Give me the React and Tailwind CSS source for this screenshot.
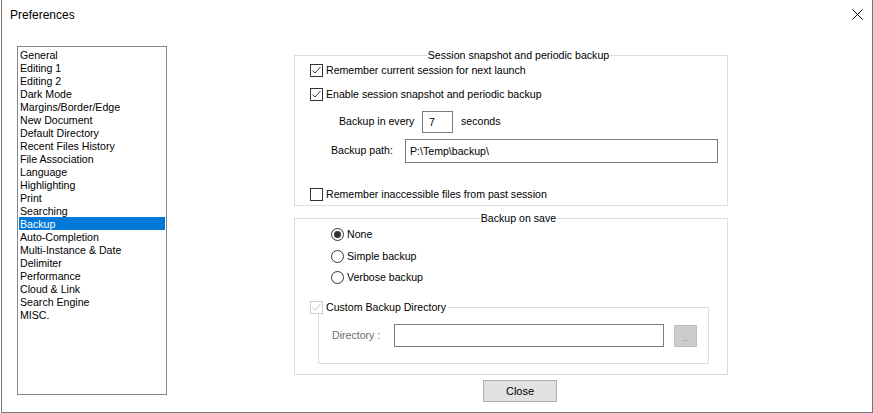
import React from "react";

const categories = [
  "General",
  "Editing 1",
  "Editing 2",
  "Dark Mode",
  "Margins/Border/Edge",
  "New Document",
  "Default Directory",
  "Recent Files History",
  "File Association",
  "Language",
  "Highlighting",
  "Print",
  "Searching",
  "Backup",
  "Auto-Completion",
  "Multi-Instance & Date",
  "Delimiter",
  "Performance",
  "Cloud & Link",
  "Search Engine",
  "MISC.",
];

const Checkbox = ({ checked, disabled, label }) => (
  <div className="flex items-center h-[13px] gap-[3px]">
    <div
      className={
        "w-[13px] h-[13px] bg-white border shrink-0 " +
        (disabled ? "border-[#cccccc]" : "border-[#333333]")
      }
    >
      {checked && (
        <svg width="11" height="11" viewBox="0 0 11 11" className="block">
          <polyline
            points="1.5,5.5 4,8 9.5,2"
            fill="none"
            stroke={disabled ? "#c4c4c4" : "#333333"}
            strokeWidth="1"
          />
        </svg>
      )}
    </div>
    <span className="leading-[13px] whitespace-nowrap">{label}</span>
  </div>
);

const Radio = ({ checked, label }) => (
  <div className="flex items-center h-[13px] gap-[3px]">
    <svg width="13" height="13" viewBox="0 0 13 13" className="block shrink-0">
      <circle cx="6.5" cy="6.5" r="6" fill="white" stroke="#333333" strokeWidth="1" />
      {checked && <circle cx="6.5" cy="6.5" r="3.5" fill="#333333" />}
    </svg>
    <span className="leading-[13px] whitespace-nowrap">{label}</span>
  </div>
);

export default function App() {
  return (
    <div className="w-[873px] h-[413px] bg-white pl-[1px] overflow-hidden">
      <div className="w-[872px] h-[413px] border-l border-r border-b border-[#767676] flex flex-col text-[10.6px] text-black font-['Liberation_Sans',Arial,sans-serif]">
        {/* title bar */}
        <div className="h-[46px] shrink-0 flex justify-between items-start pt-[8px] pl-[8px] pr-[9px]">
          <span className="text-[12px] leading-[15px]">Preferences</span>
          <svg width="11" height="11" viewBox="0 0 11 11" className="block mt-[1px]">
            <path d="M0.5 0.5 L10.5 10.5 M10.5 0.5 L0.5 10.5" stroke="#000" strokeWidth="1" />
          </svg>
        </div>

        <div className="flex items-start">
          {/* category list */}
          <div className="ml-[15px] w-[150px] h-[349px] border border-[#828790] pt-[1px] px-[1px] shrink-0">
            {categories.map((c) => (
              <div
                key={c}
                className={
                  "h-[13px] leading-[14px] pl-[1px] whitespace-nowrap " +
                  (c === "Backup" ? "bg-[#0078d7] text-white" : "")
                }
              >
                {c}
              </div>
            ))}
          </div>

          {/* settings panel */}
          <div className="ml-[127px] mt-[3px] w-[434px] flex flex-col">
            <fieldset className="border border-[#dcdcdc] pl-[15px] pb-[4px] flex flex-col">
              <legend className="mx-auto px-[1px] leading-[13px]">Session snapshot and periodic backup</legend>
              <div className="mt-[2px]">
                <Checkbox checked label="Remember current session for next launch" />
              </div>
              <div className="mt-[11px]">
                <Checkbox checked label="Enable session snapshot and periodic backup" />
              </div>
              <div className="mt-[10px] ml-[29px] flex items-center">
                <span className="w-[83px]">Backup in every</span>
                <div className="w-[31px] h-[22px] border border-[#7a7a7a] pl-[6px] leading-[20px]">7</div>
                <span className="ml-[8px]">seconds</span>
              </div>
              <div className="mt-[6px] ml-[21px] flex items-center">
                <span className="w-[74px]">Backup path:</span>
                <div className="w-[313px] h-[24px] border border-[#7a7a7a] pl-[4px] leading-[22px]">P:\Temp\backup\</div>
              </div>
              <div className="mt-[25px]">
                <Checkbox label="Remember inaccessible files from past session" />
              </div>
            </fieldset>

            <fieldset className="mt-[6px] border border-[#dcdcdc] pl-[15px] pb-[10px] flex flex-col">
              <legend className="mx-auto px-[1px] leading-[13px]">Backup on save</legend>
              <div className="mt-[3px] ml-[21px]">
                <Radio checked label="None" />
              </div>
              <div className="mt-[9px] ml-[21px]">
                <Radio label="Simple backup" />
              </div>
              <div className="mt-[8px] ml-[21px]">
                <Radio label="Verbose backup" />
              </div>

              {/* custom backup directory group */}
              <div className="relative mt-[23px] ml-[8px] w-[391px] border border-[#dcdcdc] pl-[13px] pt-[16px] pb-[16px]">
                <div className="absolute top-[-7px] left-[-9px] bg-white pr-[2px]">
                  <Checkbox checked disabled label="Custom Backup Directory" />
                </div>
                <div className="flex items-start">
                  <span className="w-[62px] leading-[23px] text-[#6d6d6d]">Directory :</span>
                  <div className="w-[270px] h-[23px] border border-[#7a7a7a]"></div>
                  <div className="ml-[10px] mt-[1px] w-[23px] h-[22px] bg-[#cccccc] border border-[#bfbfbf] flex items-end justify-center pb-[3px] text-[9px] leading-[9px] text-[#8a8a8a]">
                    ...
                  </div>
                </div>
              </div>
            </fieldset>

            <button className="mt-[5px] ml-[189px] w-[74px] h-[22px] bg-[#e1e1e1] border border-[#adadad] text-[11px] leading-[20px] text-black">
              Close
            </button>
          </div>
        </div>
      </div>
    </div>
  );
}
